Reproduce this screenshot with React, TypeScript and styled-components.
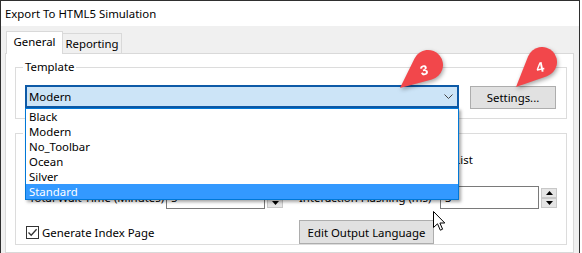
import React from "react";
import styled, { createGlobalStyle } from "styled-components";

const GlobalStyle = createGlobalStyle`
  html, body { margin: 0; padding: 0; background: #fff; }
  body { font-family: "Noto Sans", "Open Sans", sans-serif; font-size: 11.4px; color: #000; }
  * { box-sizing: border-box; }
`;

const Window = styled.div`
  position: relative;
  width: 580px;
  height: 253px;
  overflow: hidden;
  border: 1px solid #2f2f2f;
  border-bottom: none;
  display: flex;
  flex-direction: column;
  background: #f0f0f0;
`;

const TitleBar = styled.div`
  height: 25px;
  flex: none;
  background: #fff;
  display: flex;
  align-items: center;
  padding-left: 4px;
`;

const Body = styled.div`
  flex: 1;
  display: flex;
  flex-direction: column;
  padding: 5px 5px 0 4px;
  min-height: 0;
`;

const TabStrip = styled.div`
  display: flex;
  align-items: flex-end;
  padding-left: 1px;
`;

const Tab = styled.div<{ $active?: boolean; $w: number }>`
  position: relative;
  z-index: ${(p) => (p.$active ? 1 : 0)};
  width: ${(p) => p.$w}px;
  height: ${(p) => (p.$active ? 23 : 20)}px;
  margin-bottom: ${(p) => (p.$active ? -1 : 0)}px;
  background: ${(p) => (p.$active ? "#fff" : "#f0f0f0")};
  border: 1px solid #d9d9d9;
  border-bottom: none;
  border-left-width: ${(p) => (p.$active ? 1 : 0)}px;
  display: flex;
  justify-content: center;
  padding-top: 2px;
  line-height: 16px;
`;

const Panel = styled.div`
  flex: 1;
  background: #fff;
  border: 1px solid #d9d9d9;
  padding: 5px 6px 0 9px;
`;

const Group = styled.fieldset<{ $mt?: number; $pb?: number }>`
  margin: ${(p) => p.$mt ?? 0}px 0 0 0;
  padding: 10px 0 ${(p) => p.$pb ?? 0}px 9px;
  border: 1px solid #dcdcdc;
  min-width: 0;
`;

const Legend = styled.legend`
  padding: 0 2px;
  margin-left: -2px;
  line-height: 16px;
`;

const TemplateRow = styled.div`
  display: flex;
  align-items: flex-start;
`;

const ComboWrap = styled.div`
  position: relative;
  width: 434px;
`;

const Combo = styled.div`
  height: 23px;
  border: 2px solid #0d5aa7;
  background: #cce4f7;
  display: flex;
  align-items: center;
  justify-content: space-between;
  padding: 0 4px 0 2px;
`;

const DropList = styled.div`
  position: absolute;
  top: 100%;
  left: 0;
  width: 434px;
  z-index: 5;
  background: #fff;
  border: 1px solid #0078d7;
  box-shadow: 2px 2px 3px rgba(0, 0, 0, 0.35);
`;

const ListItem = styled.div<{ $selected?: boolean }>`
  height: 15px;
  line-height: 15px;
  padding-left: 3px;
  background: ${(p) => (p.$selected ? "#3399ff" : "#fff")};
  color: ${(p) => (p.$selected ? "#fff" : "#000")};
`;

const Button = styled.div<{ $w: number; $h: number; $ml?: number; $mt?: number }>`
  width: ${(p) => p.$w}px;
  height: ${(p) => p.$h}px;
  margin-left: ${(p) => p.$ml ?? 0}px;
  margin-top: ${(p) => p.$mt ?? 0}px;
  flex: none;
  background: #e1e1e1;
  border: 1px solid #adadad;
  display: flex;
  align-items: center;
  justify-content: center;
  white-space: nowrap;
`;

const Row = styled.div<{ $h: number; $mt?: number }>`
  display: grid;
  grid-template-columns: 274px 1fr;
  height: ${(p) => p.$h}px;
  margin-top: ${(p) => p.$mt ?? 0}px;
  align-items: center;
`;

const Cell = styled.div`
  display: flex;
  align-items: center;
  height: 100%;
`;

const FieldLabel = styled.div<{ $pad?: number }>`
  width: 141px;
  flex: none;
  padding-left: ${(p) => p.$pad ?? 0}px;
  white-space: nowrap;
`;

const TextBox = styled.div`
  width: 99px;
  height: 23px;
  border: 1px solid #7a7a7a;
  background: #fff;
  padding-left: 4px;
  display: flex;
  align-items: center;
`;

const Spinner = styled.div`
  display: flex;
  flex-direction: column;
  align-self: flex-start;
  margin: 2px 0 0 2px;
`;

const SpinBtn = styled.div`
  width: 16px;
  height: 10px;
  background: #e5e5e5;
  border: 1px solid #c8c8c8;
  display: flex;
  align-items: center;
  justify-content: center;
`;

const CheckRow = styled.label`
  display: flex;
  align-items: center;
  gap: 3px;
  margin-left: 1px;
  white-space: nowrap;
`;

const Box = styled.span`
  width: 13px;
  height: 13px;
  border: 1px solid #333;
  background: #fff;
  display: inline-flex;
  align-items: center;
  justify-content: center;
`;

const Overlay = styled.svg<{ $x: number; $y: number }>`
  position: absolute;
  left: ${(p) => p.$x - 1}px;
  top: ${(p) => p.$y - 1}px;
  z-index: 10;
  overflow: visible;
`;

function pinPath(cx: number, cy: number, r: number, tx: number, ty: number) {
  const dx = tx - cx;
  const dy = ty - cy;
  const d = Math.hypot(dx, dy);
  const th = Math.atan2(dy, dx);
  const a = Math.acos(r / d);
  const p1 = [cx + r * Math.cos(th + a), cy + r * Math.sin(th + a)];
  const p2 = [cx + r * Math.cos(th - a), cy + r * Math.sin(th - a)];
  return `M${tx} ${ty} L${p1[0].toFixed(2)} ${p1[1].toFixed(2)} A${r} ${r} 0 1 1 ${p2[0].toFixed(2)} ${p2[1].toFixed(2)} Z`;
}

function Marker(props: { cx: number; cy: number; r: number; tx: number; ty: number; label: string; lx: number; ly: number }) {
  const { cx, cy, r, tx, ty, label, lx, ly } = props;
  const bx = Math.floor(Math.min(cx - r, tx)) - 2;
  const by = Math.floor(Math.min(cy - r, ty)) - 2;
  const w = Math.ceil(Math.max(cx + r, tx)) + 4 - bx;
  const h = Math.ceil(Math.max(cy + r, ty)) + 4 - by;
  return (
    <Overlay $x={bx} $y={by} width={w} height={h} viewBox={`${bx} ${by} ${w} ${h}`} style={{ filter: "drop-shadow(1px 2px 2px rgba(0,0,0,0.35))" }}>
      <path d={pinPath(cx, cy, r, tx, ty)} fill="#f2474b" />
      <text
        x={lx}
        y={ly}
        fill="#fff"
        fontSize="14"
        fontWeight="bold"
        fontFamily="'Liberation Sans', sans-serif"
        textAnchor="middle"
        dominantBaseline="central"
        transform={`rotate(-12 ${lx} ${ly})`}
      >
        {label}
      </text>
    </Overlay>
  );
}

const Chevron = () => (
  <svg width="9" height="5" viewBox="0 0 9 5">
    <path d="M0.5 0.5 L4.5 4.5 L8.5 0.5" fill="none" stroke="#444" strokeWidth="1" />
  </svg>
);

const Tri = ({ up }: { up?: boolean }) => (
  <svg width="7" height="4" viewBox="0 0 7 4">
    <path d={up ? "M0 4 L3.5 0 L7 4 Z" : "M0 0 L7 0 L3.5 4 Z"} fill="#000" />
  </svg>
);

const Check = () => (
  <svg width="11" height="11" viewBox="0 0 11 11">
    <path d="M1.5 5.5 L4.2 8.3 L9.6 2.2" fill="none" stroke="#333" strokeWidth="1.3" />
  </svg>
);

const CheckBox = ({ label }: { label: string }) => (
  <CheckRow>
    <Box>
      <Check />
    </Box>
    {label}
  </CheckRow>
);

const templates = ["Black", "Modern", "No_Toolbar", "Ocean", "Silver", "Standard"];

export default function App() {
  return (
    <>
      <GlobalStyle />
      <Window>
        <TitleBar>Export To HTML5 Simulation</TitleBar>
        <Body>
          <TabStrip>
            <Tab $active $w={57}>General</Tab>
            <Tab $w={59}>Reporting</Tab>
          </TabStrip>
          <Panel>
            <Group $pb={9}>
              <Legend>Template</Legend>
              <TemplateRow>
                <ComboWrap>
                  <Combo>
                    <span>Modern</span>
                    <Chevron />
                  </Combo>
                  <DropList>
                    {templates.map((t) => (
                      <ListItem key={t} $selected={t === "Standard"}>
                        {t}
                      </ListItem>
                    ))}
                  </DropList>
                </ComboWrap>
                <Button $w={86} $h={23} $ml={11} $mt={1}>
                  Settings...
                </Button>
              </TemplateRow>
            </Group>
            <Group $mt={6}>
              <Legend>Options</Legend>
              <Row $h={16}>
                <Cell>
                  <CheckBox label="Show Progress Bar" />
                </Cell>
                <Cell>
                  <CheckBox label="Show Slide Titles in Menu List" />
                </Cell>
              </Row>
              <Row $h={23} $mt={19}>
                <Cell>
                  <FieldLabel $pad={4}>Total Wait Time (Minutes)</FieldLabel>
                  <TextBox>5</TextBox>
                  <Spinner>
                    <SpinBtn>
                      <Tri up />
                    </SpinBtn>
                    <SpinBtn>
                      <Tri />
                    </SpinBtn>
                  </Spinner>
                </Cell>
                <Cell>
                  <FieldLabel>Interaction Flashing (ms)</FieldLabel>
                  <TextBox>3</TextBox>
                  <Spinner>
                    <SpinBtn>
                      <Tri up />
                    </SpinBtn>
                    <SpinBtn>
                      <Tri />
                    </SpinBtn>
                  </Spinner>
                </Cell>
              </Row>
              <Row $h={24} $mt={11}>
                <Cell>
                  <CheckBox label="Generate Index Page" />
                </Cell>
                <Cell>
                  <Button $w={135} $h={24}>
                    Edit Output Language
                  </Button>
                </Cell>
              </Row>
            </Group>
          </Panel>
        </Body>
        <Marker cx={428} cy={65} r={15} tx={400} ty={88} label="3" lx={424} ly={70} />
        <Marker cx={542} cy={62} r={15} tx={516} ty={87} label="4" lx={540} ly={67} />
        <Overlay $x={433} $y={211} width={13} height={20} viewBox="0 0 13 20">
          <path d="M0.5 0.5 L0.5 16.5 L4.5 12.8 L7.3 19.2 L9.6 18.2 L6.9 12 L11.8 12 Z" fill="#fff" stroke="#000" strokeWidth="1" strokeLinejoin="miter" />
        </Overlay>
      </Window>
    </>
  );
}
